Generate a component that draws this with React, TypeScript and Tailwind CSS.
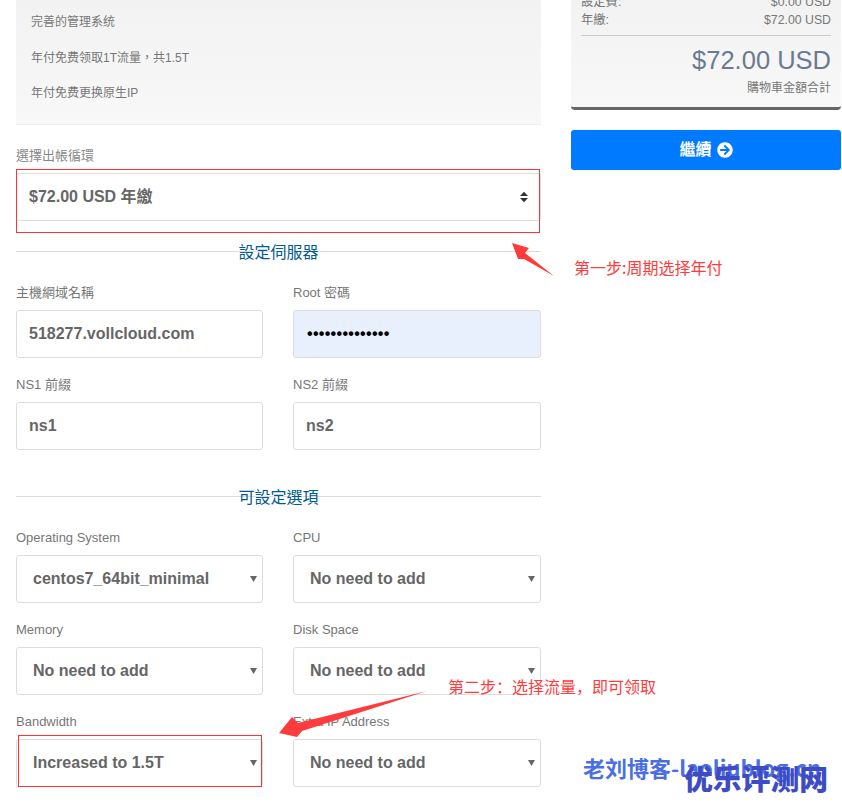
import { FaArrowCircleRight } from "react-icons/fa";

const font = "font-['Liberation_Sans','Noto_Sans_CJK_TC',sans-serif]";

function SectionTitle({ title }: { title: string }) {
  return (
    <div className="relative h-[18px]">
      <div className="absolute inset-x-0 top-[7px] border-t border-[#dddddd]" />
      <div className="relative text-center text-[16px] leading-[18px] text-[#005b8f]">
        {title}
      </div>
    </div>
  );
}

function TextField({
  label,
  value,
  type = "text",
}: {
  label: string;
  value: string;
  type?: string;
}) {
  return (
    <div>
      <div className="h-[18px] text-[13px] leading-[18px] text-[#777777]">
        {label}
      </div>
      <input
        readOnly
        type={type}
        value={value}
        className={
          type === "password"
            ? "mt-[8px] block h-[48px] w-full rounded-[3px] border border-[#dddddd] bg-[#e8f0fe] px-[13px] text-[16px] font-bold tracking-[0.3px] text-black outline-none"
            : "mt-[8px] block h-[48px] w-full rounded-[3px] border border-[#dddddd] bg-white px-[12px] text-[16px] font-bold text-[#666666] outline-none"
        }
      />
    </div>
  );
}

function SelectField({ label, value }: { label: string; value: string }) {
  return (
    <div>
      <div className="h-[18px] text-[13px] leading-[18px] text-[#777777]">
        {label}
      </div>
      <div className="relative mt-[8px] flex h-[48px] items-center rounded-[3px] border border-[#dddddd] bg-white pl-[16px] text-[16px] font-bold text-[#666666]">
        {value}
        <svg
          viewBox="0 0 7 6"
          className="absolute right-[5px] top-[20px] h-[6px] w-[7px] fill-[#666666]"
        >
          <path d="M0 0h7L3.5 6z" />
        </svg>
      </div>
    </div>
  );
}

export default function App() {
  return (
    <div
      className={`relative flex h-[806px] w-[842px] gap-[30px] overflow-hidden bg-white pl-[16px] ${font}`}
    >
      {/* Left column */}
      <div className="w-[525px] shrink-0">
        <div className="flex h-[125px] flex-col gap-[17.5px] border-b border-[#eeeeee] bg-gradient-to-b from-[#f2f2f2] to-[#f8f8f8] pl-[15px] pt-[13px] text-[12px] leading-[18px] text-[#777777]">
          <div>完善的管理系统</div>
          <div>年付免费领取1T流量，共1.5T</div>
          <div>年付免费更换原生IP</div>
        </div>

        <div className="mt-[22px] h-[18px] text-[13px] leading-[18px] text-[#888888]">
          選擇出帳循環
        </div>
        <div className="relative mt-[8px] flex h-[48px] items-center rounded-[3px] border-y border-r border-[#dddddd] bg-white pl-[13px] text-[16px] font-bold text-[#666666]">
          $72.00 USD 年繳
          <svg
            viewBox="0 0 9 12"
            className="absolute right-[12px] top-[17px] h-[12px] w-[8px] fill-[#333333]"
          >
            <path d="M0 5 4.5 0 9 5z" />
            <path d="M0 7h9l-4.5 5z" />
          </svg>
        </div>

        <div className="mt-[23px]">
          <SectionTitle title="設定伺服器" />
        </div>

        <div className="mt-[22px] grid grid-cols-[247px_248px] gap-x-[30px] gap-y-[18px]">
          <TextField label="主機網域名稱" value="518277.vollcloud.com" />
          <TextField label="Root 密碼" value="12345678901234" type="password" />
          <TextField label="NS1 前綴" value="ns1" />
          <TextField label="NS2 前綴" value="ns2" />
        </div>

        <div className="mt-[39px]">
          <SectionTitle title="可設定選項" />
        </div>

        <div className="mt-[22px] grid grid-cols-[247px_248px] gap-x-[30px] gap-y-[18px]">
          <SelectField label="Operating System" value="centos7_64bit_minimal" />
          <SelectField label="CPU" value="No need to add" />
          <SelectField label="Memory" value="No need to add" />
          <SelectField label="Disk Space" value="No need to add" />
          <SelectField label="Bandwidth" value="Increased to 1.5T" />
          <SelectField label="Extra IP Address" value="No need to add" />
        </div>
      </div>

      {/* Order summary */}
      <div className="w-[270px] shrink-0">
        <div className="h-[110px] overflow-hidden rounded-b-[4px] border-b-[3px] border-[#666666] bg-gradient-to-b from-[#f2f2f2] to-[#f8f8f8] px-[10px] text-[12.3px] leading-[17px] text-[#777777]">
          <div className="-mt-[6px] flex justify-between">
            <span>設定費:</span>
            <span>$0.00 USD</span>
          </div>
          <div className="mt-[1px] flex justify-between border-b border-[#cccccc] pb-[6px]">
            <span>年繳:</span>
            <span>$72.00 USD</span>
          </div>
          <div className="mt-[9px] text-right text-[25.5px] leading-[30px] text-[#6b7a90]">
            $72.00 USD
          </div>
          <div className="mt-[5px] text-right text-[12px]">購物車金額合計</div>
        </div>
        <button className="mt-[20px] flex h-[40px] w-full items-center justify-center gap-[5px] rounded-[3px] bg-[#007bff] text-[16px] font-bold text-white">
          繼續
          <FaArrowCircleRight className="h-[16px] w-[16px]" />
        </button>
      </div>

      {/* Screenshot annotations */}
      <div className="absolute left-[16px] top-[169px] h-[64px] w-[524px] border border-[#ff3333]" />
      <div className="absolute left-[18px] top-[735px] h-[52px] w-[244px] border border-[#ff3333]" />
      <svg
        viewBox="0 0 842 806"
        className="pointer-events-none absolute left-0 top-0 h-[806px] w-[842px] fill-[#ff3b3b]"
      >
        <path d="M512 243 529 248 525 253 554 276 524 259 518 259z" />
        <path d="M279 733 292 717 298 723 427 691 302 731 297 737z" />
      </svg>
      <div className="absolute left-[574px] top-[256px] whitespace-nowrap font-['Noto_Sans_CJK_SC',sans-serif] text-[16px] leading-[22px] text-[#ff3b3b]">
        第一步:周期选择年付
      </div>
      <div className="absolute left-[448px] top-[675px] whitespace-nowrap font-['Noto_Sans_CJK_SC',sans-serif] text-[16px] leading-[22px] text-[#ff3b3b]">
        第二步：选择流量，即可领取
      </div>
      <div className="absolute left-[583px] top-[753px] whitespace-nowrap font-['Noto_Sans_CJK_SC',sans-serif] text-[22px] font-bold leading-[28px] text-[#4a6fe3]">
        老刘博客-laoliublog.cn
      </div>
      <div className="absolute left-[684px] top-[760px] whitespace-nowrap font-['Noto_Sans_CJK_SC',sans-serif] text-[28.8px] font-black leading-[36px] text-[#3d4cc4]">
        优乐评测网
      </div>
    </div>
  );
}
